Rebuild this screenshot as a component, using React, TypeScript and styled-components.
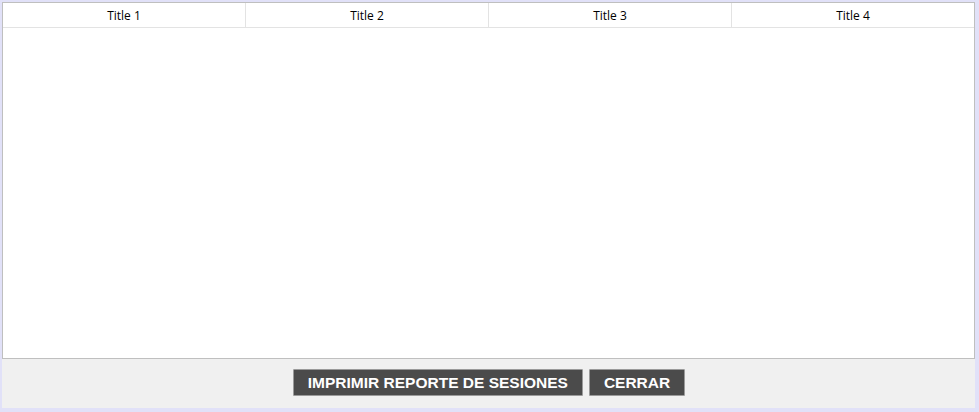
import React from "react";
import styled, { createGlobalStyle } from "styled-components";

const Global = createGlobalStyle`
  html, body { margin: 0; padding: 0; background: #e1e1f8; }
  body { font-family: "Open Sans", "Noto Sans", sans-serif; }
  * { box-sizing: border-box; }
`;

const Page = styled.div`
  padding: 2px 4px 4px 2px;
  height: 412px;
`;

const Window = styled.div`
  display: flex;
  flex-direction: column;
  width: 973px;
  height: 406px;
  background: #f0f0f0;
`;

const TableBox = styled.div`
  height: 357px;
  border: 1px solid #bfbfbf;
  background: #ffffff;
`;

const HeaderRow = styled.div`
  display: grid;
  grid-template-columns: 243px 243px 243px 1fr;
  height: 25px;
  border-bottom: 1px solid #e3e3e3;
`;

const HeaderCell = styled.div<{ $last?: boolean }>`
  display: flex;
  align-items: center;
  justify-content: center;
  font-family: "Open Sans", "Noto Sans", sans-serif;
  font-size: 12px;
  color: #000;
  border-right: ${(p) => (p.$last ? "none" : "1px solid #e3e3e3")};
`;

const Footer = styled.div`
  flex: 1;
  display: flex;
  justify-content: center;
  align-items: flex-start;
  gap: 6px;
  padding-top: 10px;
  padding-left: 1px;
`;

const Button = styled.button`
  height: 27px;
  padding: 0 14px;
  background: #4b4b4b;
  border: 1px solid #9a9a9a;
  border-radius: 1px;
  color: #ffffff;
  font-family: "Liberation Sans", Arial, sans-serif;
  font-weight: bold;
  font-size: 15.5px;
  line-height: 1;
  cursor: pointer;
`;

const titles = ["Title 1", "Title 2", "Title 3", "Title 4"];

export default function App() {
  return (
    <>
      <Global />
      <Page>
        <Window>
          <TableBox>
            <HeaderRow>
              {titles.map((t, i) => (
                <HeaderCell key={t} $last={i === titles.length - 1}>
                  {t}
                </HeaderCell>
              ))}
            </HeaderRow>
          </TableBox>
          <Footer>
            <Button>IMPRIMIR REPORTE DE SESIONES</Button>
            <Button>CERRAR</Button>
          </Footer>
        </Window>
      </Page>
    </>
  );
}
